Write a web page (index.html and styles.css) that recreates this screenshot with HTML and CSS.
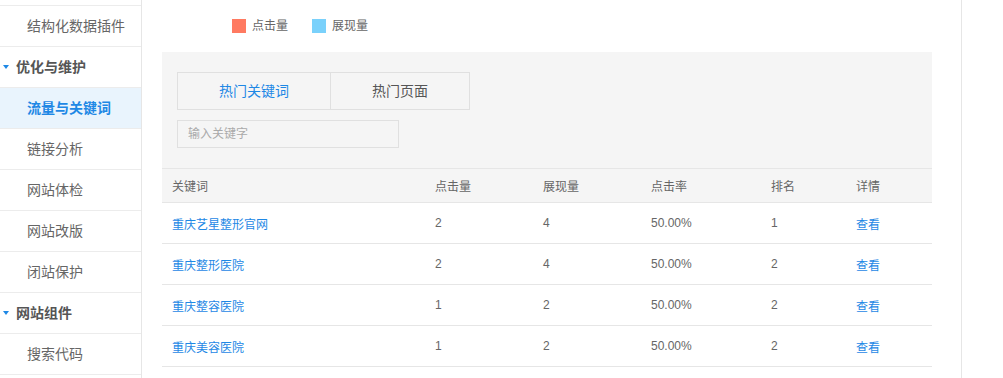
FILE: index.html
```html
<!DOCTYPE html>
<html lang="zh-CN">
<head>
    <meta charset="UTF-8">
    <title>流量与关键词</title>
    <link rel="stylesheet" href="styles.css">
</head>
<body>
<div class="page">
    <ul class="side">
        <li class="item">结构化数据插件</li>
        <li class="group"><span class="arrow"></span>优化与维护</li>
        <li class="item active">流量与关键词</li>
        <li class="item">链接分析</li>
        <li class="item">网站体检</li>
        <li class="item">网站改版</li>
        <li class="item">闭站保护</li>
        <li class="group"><span class="arrow"></span>网站组件</li>
        <li class="item">搜索代码</li>
    </ul>

    <div class="main">
        <div class="legend">
            <span class="swatch clicks"></span><span class="legend-text">点击量</span>
            <span class="swatch views"></span><span class="legend-text">展现量</span>
        </div>

        <div class="panel">
            <div class="tabs">
                <div class="tab on">热门关键词</div>
                <div class="tab">热门页面</div>
            </div>
            <input class="search" type="text" placeholder="输入关键字">

            <table class="data">
                <thead>
                <tr>
                    <th class="c1">关键词</th>
                    <th class="c2">点击量</th>
                    <th class="c3">展现量</th>
                    <th class="c4">点击率</th>
                    <th class="c5">排名</th>
                    <th>详情</th>
                </tr>
                </thead>
                <tbody>
                <tr>
                    <td><a href="#">重庆艺星整形官网</a></td>
                    <td>2</td><td>4</td><td>50.00%</td><td>1</td>
                    <td><a href="#">查看</a></td>
                </tr>
                <tr>
                    <td><a href="#">重庆整形医院</a></td>
                    <td>2</td><td>4</td><td>50.00%</td><td>2</td>
                    <td><a href="#">查看</a></td>
                </tr>
                <tr>
                    <td><a href="#">重庆整容医院</a></td>
                    <td>1</td><td>2</td><td>50.00%</td><td>2</td>
                    <td><a href="#">查看</a></td>
                </tr>
                <tr>
                    <td><a href="#">重庆美容医院</a></td>
                    <td>1</td><td>2</td><td>50.00%</td><td>2</td>
                    <td><a href="#">查看</a></td>
                </tr>
                </tbody>
            </table>
        </div>
    </div>
</div>
</body>
</html>
```

FILE: styles.css
```css
body {
    margin: 0;
    font-family: "Liberation Sans", "Noto Sans CJK SC", sans-serif;
    color: #666;
    background: #fff;
}

.page {
    display: flex;
    align-items: flex-start;
    height: 378px;
    overflow: hidden;
}

/* left menu */
.side {
    list-style: none;
    margin: 0;
    padding: 5px 0 0;
    width: 141px;
    height: 373px;
    border-right: 1px solid #e6e6e6;
    flex-shrink: 0;
}

.side li {
    height: 40px;
    line-height: 40px;
    font-size: 14px;
    border-bottom: 1px solid #ececec;
}

.side li:first-child {
    border-top: 1px solid #ececec;
}

.item {
    padding-left: 27px;
    color: #666;
}

.item.active {
    background: #e9f4fd;
    color: #1e88e5;
    font-weight: bold;
}

.group {
    display: flex;
    align-items: center;
    padding-left: 3px;
    font-weight: bold;
    color: #555;
}

.arrow {
    width: 0;
    height: 0;
    border-left: 3px solid transparent;
    border-right: 3px solid transparent;
    border-top: 4px solid #1e88e5;
    margin-right: 7px;
}

/* main area */
.main {
    width: 770px;
    height: 378px;
    padding: 0 29px 0 20px;
    border-right: 1px solid #e6e6e6;
    flex-shrink: 0;
}

.legend {
    display: flex;
    align-items: center;
    height: 52px;
    padding-left: 70px;
    box-sizing: border-box;
    padding-bottom: 1px;
    font-size: 12px;
}

.swatch {
    width: 14px;
    height: 14px;
    margin-right: 6px;
}

.clicks {
    background: #ff7a61;
}

.views {
    background: #7ad1fb;
}

.legend-text {
    margin-right: 24px;
    line-height: 14px;
}

.panel {
    background: #f5f5f5;
    padding-top: 20px;
}

.tabs {
    display: flex;
    margin-left: 15px;
    width: 291px;
    border: 1px solid #e0e0e0;
    background: #f5f5f5;
}

.tab {
    height: 36px;
    line-height: 36px;
    text-align: center;
    font-size: 14px;
    color: #555;
    width: 138px;
}

.tab.on {
    width: 152px;
    color: #1e88e5;
    border-right: 1px solid #e0e0e0;
}

.search {
    display: block;
    margin: 10px 0 20px 15px;
    width: 222px;
    height: 28px;
    box-sizing: border-box;
    border: 1px solid #e0e0e0;
    background: #f5f5f5;
    padding: 0 10px;
    font-size: 12px;
    font-family: inherit;
    outline: none;
}

.search::placeholder {
    color: #aaa;
}

.data {
    width: 770px;
    border-collapse: collapse;
    font-size: 12px;
    background: #fff;
}

.data th {
    text-align: left;
    font-weight: normal;
    color: #666;
    height: 33px;
    padding: 0 0 0 10px;
    background: #f5f5f5;
    border-top: 1px solid #e6e6e6;
    border-bottom: 1px solid #e6e6e6;
}

.data td {
    height: 40px;
    padding: 0 0 0 10px;
    border-bottom: 1px solid #e6e6e6;
    color: #666;
}

.data a {
    color: #1e88e5;
    text-decoration: none;
}

.c1 { width: 253px; }
.c2 { width: 98px; }
.c3 { width: 98px; }
.c4 { width: 110px; }
.c5 { width: 75px; }
```
